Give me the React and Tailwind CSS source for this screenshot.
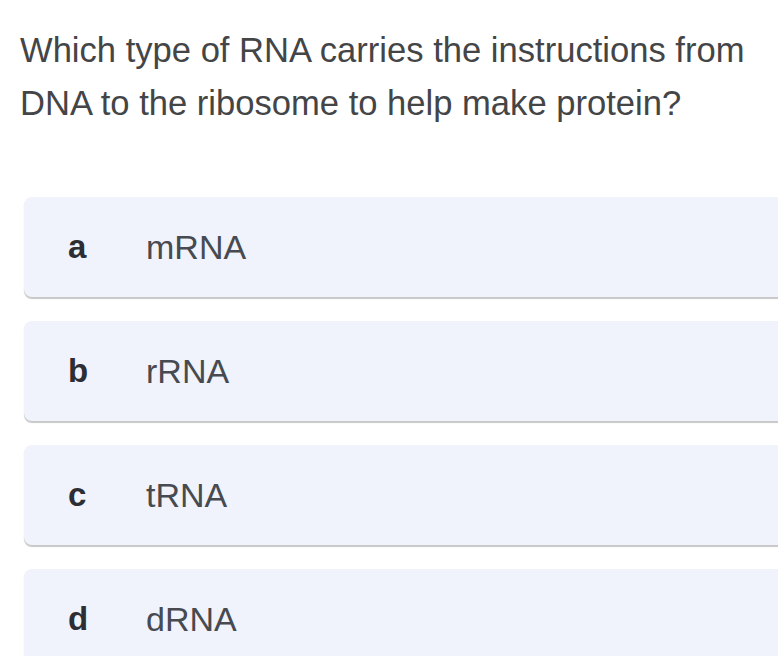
import React from 'react';

const options = [
  { key: 'a', text: 'mRNA' },
  { key: 'b', text: 'rRNA' },
  { key: 'c', text: 'tRNA' },
  { key: 'd', text: 'dRNA' },
];

function Option({ letter, text }) {
  return (
    <div className="flex items-center h-[100px] rounded-lg bg-[#f0f3fb] shadow-[0_2px_1px_rgba(0,0,0,0.22)] pl-[44px]">
      <span className="w-[78px] shrink-0 text-[33px] font-bold text-[#2c2e33]">{letter}</span>
      <span className="text-[34px] text-[#474a50]">{text}</span>
    </div>
  );
}

export default function App() {
  return (
    <div className="w-[778px] h-[656px] overflow-hidden bg-white font-['Liberation_Sans',Arial,sans-serif]">
      <h1 className="pt-[24px] pl-[20px] pr-2 text-[34.6px] leading-[53px] font-normal text-[#444547]">
        Which type of RNA carries the instructions from DNA to the ribosome to help make protein?
      </h1>
      <div className="mt-[67px] ml-[24px] w-[800px] flex flex-col gap-[24px]">
        {options.map((o) => (
          <Option key={o.key} letter={o.key} text={o.text} />
        ))}
      </div>
    </div>
  );
}
